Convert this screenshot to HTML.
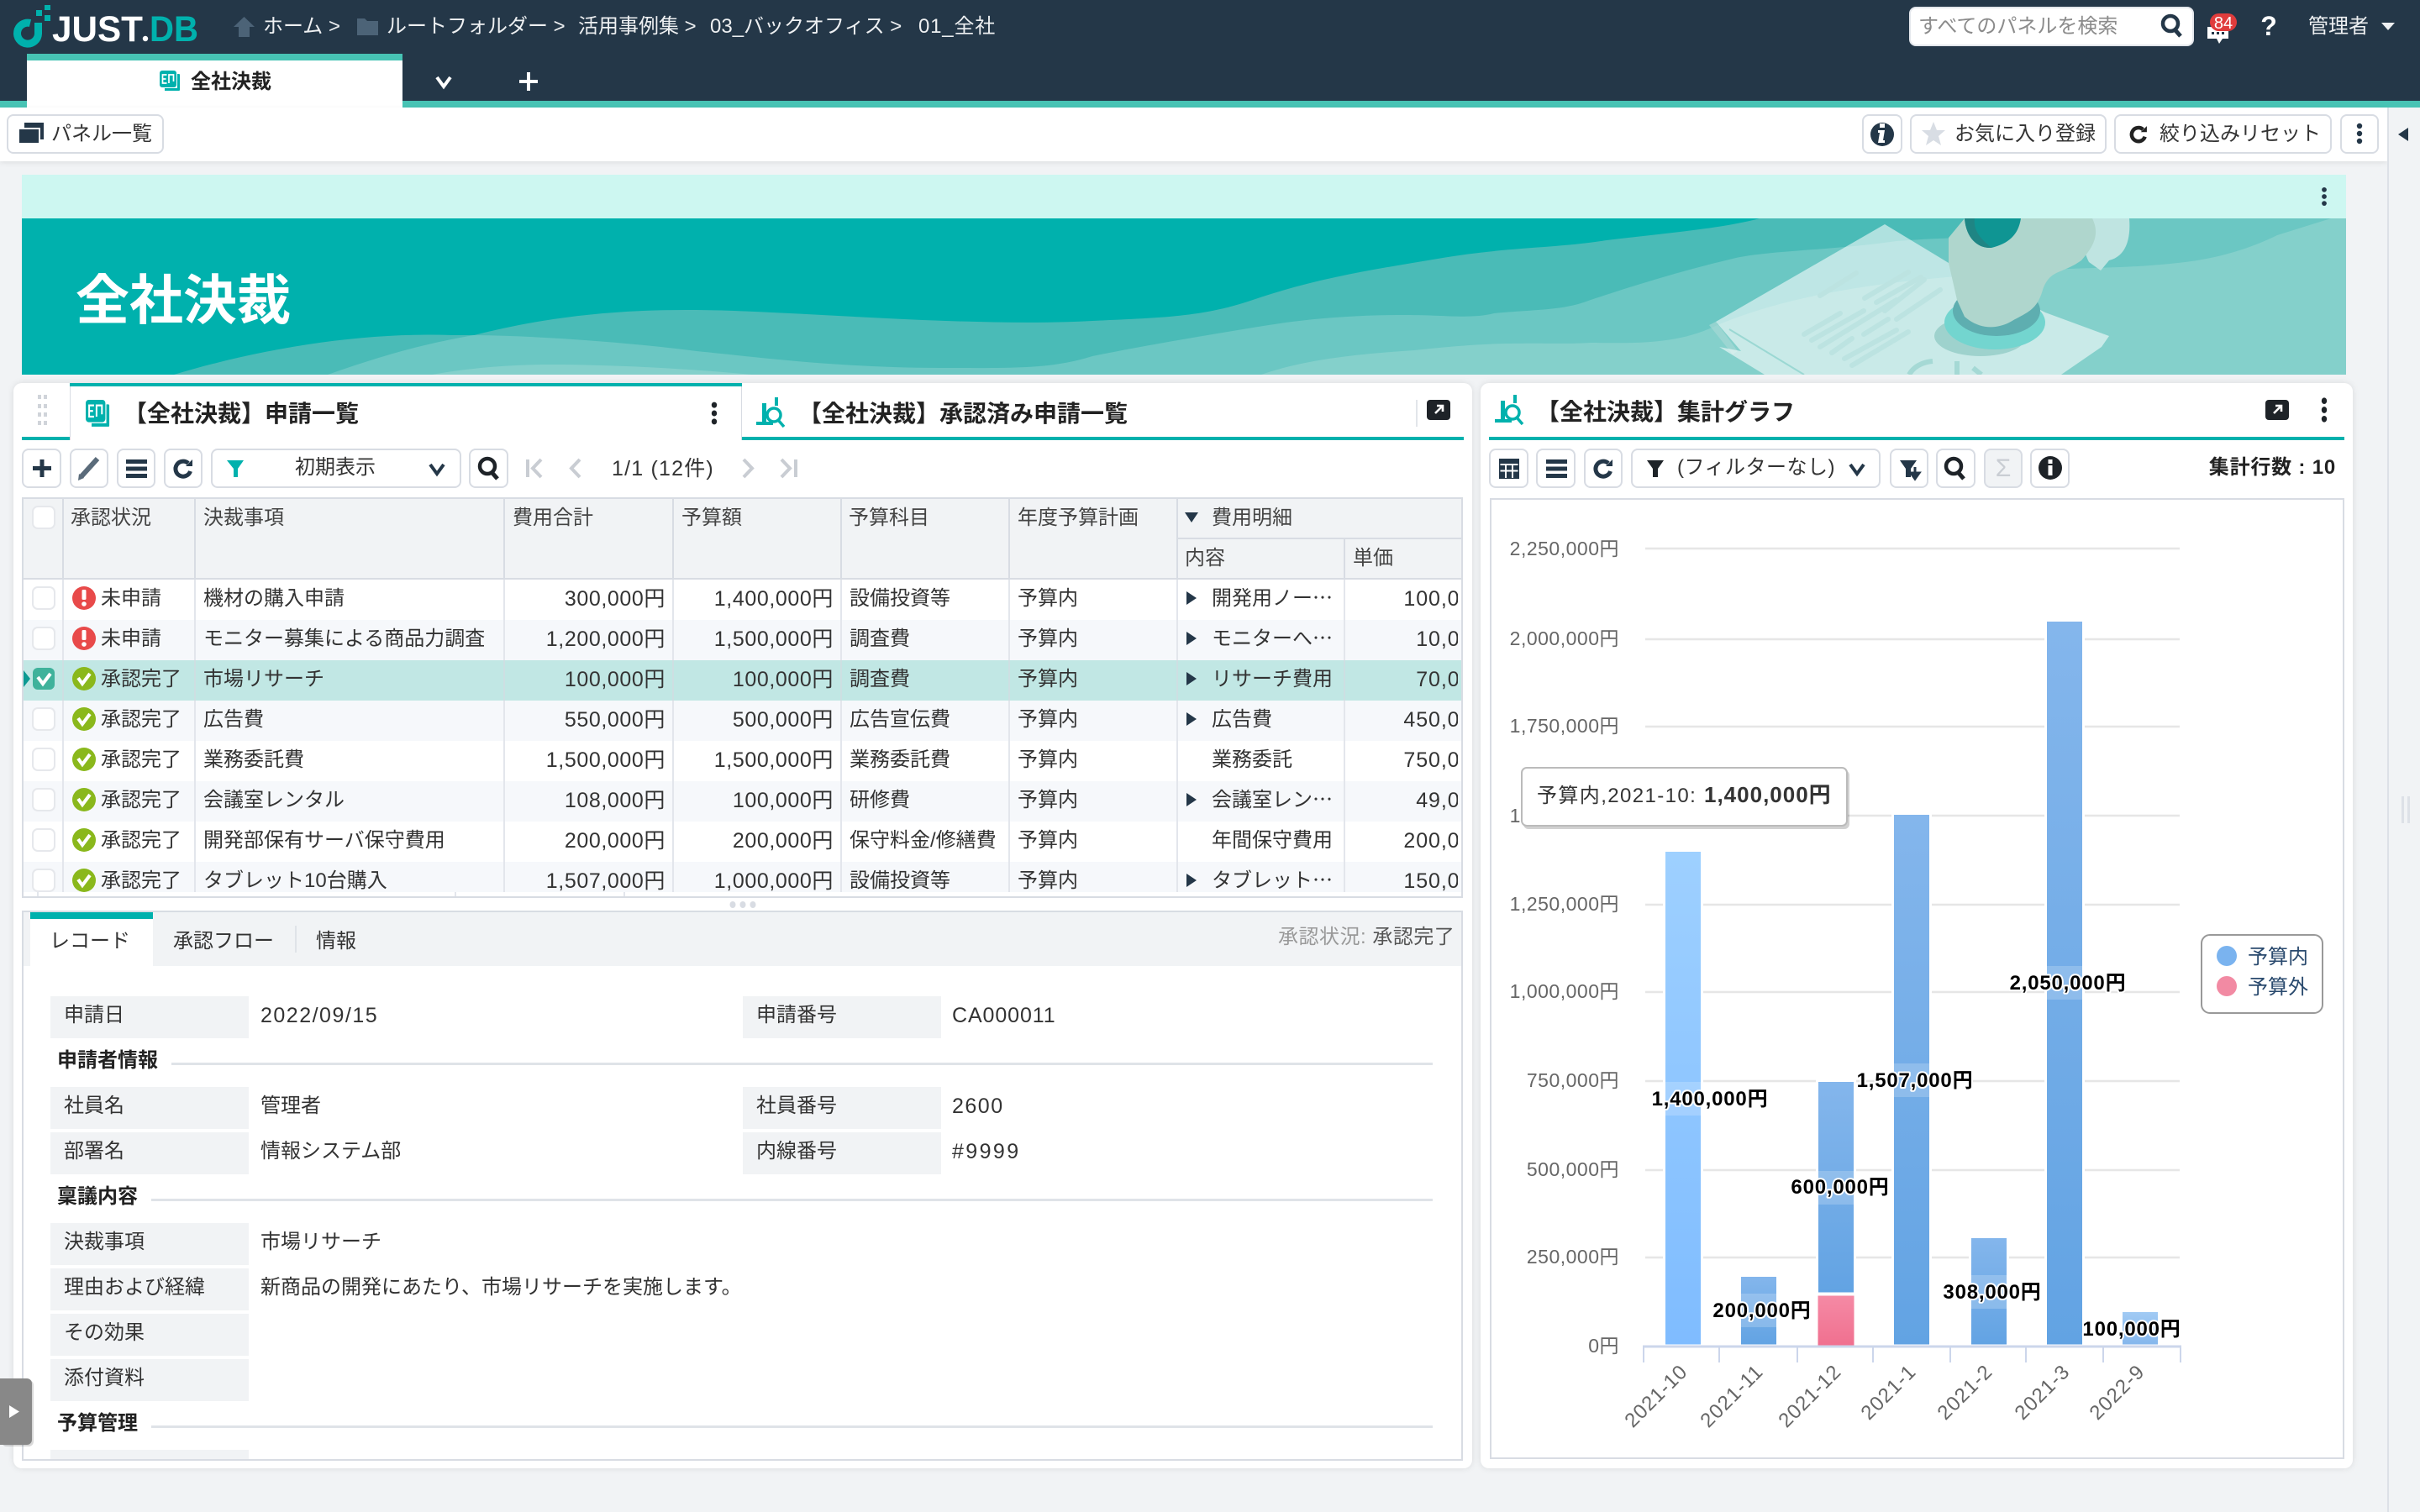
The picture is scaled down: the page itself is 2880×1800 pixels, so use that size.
<!DOCTYPE html>
<html lang="ja"><head><meta charset="utf-8"><title>全社決裁</title>
<style>
*{box-sizing:border-box}
html,body{margin:0;padding:0;width:2880px;height:1800px;overflow:hidden;background:#f1f3f5;font-family:"Liberation Sans","Noto Sans CJK JP",sans-serif;font-size:24px;color:#333}
.b{position:absolute}
.t{position:absolute;line-height:48px;height:48px;white-space:nowrap;transform:translateY(-22px)}
.w{color:#eef0f2}
.btn{position:absolute;background:#fff;border:2px solid #d8dce3;border-radius:8px;height:47px;top:534px}
.btn2{position:absolute;background:#fff;border:2px solid #d8dce3;border-radius:8px;height:47px;top:136px}
.n{font-size:25px;letter-spacing:1.5px}
table{border-collapse:separate;border-spacing:0;table-layout:fixed;width:1711px;font-size:24px}
th{font-weight:400;background:#f1f3f5;border-right:2px solid #d8dce3;border-bottom:2px solid #d8dce3;text-align:left;vertical-align:top;line-height:46px;padding:0 0 0 8px;height:48px;color:#444;overflow:hidden;white-space:nowrap}
td{height:48px;padding:0 0 2px 8px;border-right:2px solid #e3e6ec;white-space:nowrap;overflow:hidden;line-height:44px;color:#333}
tr.e td{background:#f6f8fb}
tr.o td{background:#fff}
tr.s td{background:#c1e7e4;border-right-color:#cddfe2}
td.r{text-align:right;padding-right:8px;font-size:25px;letter-spacing:.6px}
td.s{padding-left:44px}
td.k{padding-left:9px}
td.d{padding-left:40px}
td.u{padding:0 0 2px 0;font-size:25px;letter-spacing:.9px;text-align:right}
tr.o td.u{border-right:4px solid #fff}
tr.e td.u{border-right:4px solid #f6f8fb}
tr.s td.u{border-right:4px solid #c1e7e4}
td.u span{display:block;margin-right:-58px}
.lb{position:absolute;background:#f1f3f5;height:50px;width:236px}
.sl{position:absolute;height:3px;background:#dfe3e8;right:1175px}
</style></head><body>

<!-- header -->
<div class="b" style="left:0;top:0;width:2880px;height:120px;background:#243748"></div>
<div class="b" style="left:0;top:120px;width:2880px;height:8px;background:#47c3b4"></div>
<div class="b" style="left:32px;top:64px;width:447px;height:64px;background:#fff;border-top:8px solid #47c3b4"></div>
<div class="t" style="left:227px;top:96px;font-weight:700;color:#222">全社決裁</div>

<div class="t w" style="left:313px;top:30px">ホーム &gt;</div>
<div class="t w" style="left:460px;top:30px">ルートフォルダー &gt;</div>
<div class="t w" style="left:688px;top:30px">活用事例集 &gt;</div>
<div class="t w" style="left:845px;top:30px">03_バックオフィス &gt;</div>
<div class="t w" style="left:1093px;top:30px;letter-spacing:.8px">01_全社</div>

<div class="b" style="left:2272px;top:8px;width:339px;height:47px;background:#fff;border-radius:8px;border:2px solid #e4e7ec"></div>
<div class="t" style="left:2283px;top:30px;color:#8b8b8b">すべてのパネルを検索</div>
<div class="t w" style="left:2747px;top:30px">管理者</div>

<!-- toolbar -->
<div class="b" style="left:0;top:128px;width:2841px;height:64px;background:#fff;box-shadow:0 2px 6px rgba(0,0,0,.08)"></div>
<div class="b" style="left:2841px;top:128px;width:39px;height:1672px;background:#f1f3f5;border-left:2px solid #dde1e7"></div>
<div class="btn2" style="left:8px;width:187px"></div>
<div class="t" style="left:61px;top:158px">パネル一覧</div>
<div class="btn2" style="left:2216px;width:48px"></div>
<div class="btn2" style="left:2273px;width:234px"></div>
<div class="t" style="left:2326px;top:158px">お気に入り登録</div>
<div class="btn2" style="left:2516px;width:259px"></div>
<div class="t" style="left:2570px;top:158px">絞り込みリセット</div>
<div class="btn2" style="left:2785px;width:46px"></div>

<!-- banner -->
<div class="b" style="left:26px;top:208px;width:2766px;height:52px;background:#cdf7f1"></div>
<svg class="b" style="left:26px;top:260px" width="2766" height="186" viewBox="26 260 2766 186">
<rect x="26" y="260" width="2766" height="186" fill="#00b1ad"/>
<path fill="#4abbb7" d="M207 446C310 415 430 395 539 399L564 399C640 380 720 368 829 369C950 370 1150 390 1300 382C1380 378 1430 378 1491 357C1570 330 1640 320 1711 308C1790 294 1850 296 1912 286C1980 278 2050 272 2094 260L2792 260L2792 446Z"/>
<path fill="#6bc7c3" d="M390 446C450 425 500 410 564 399C650 400 750 408 829 418C900 425 1000 438 1119 438C1200 438 1250 440 1300 424C1370 410 1430 400 1491 390C1560 378 1620 375 1673 375C1720 375 1750 380 1778 373C1830 368 1860 370 1893 357C1930 345 1990 325 2066 307C2110 298 2180 298 2257 287C2340 280 2440 285 2532 260L2792 260L2792 446Z"/>
<path fill="#84d0cb" d="M514 446C570 436 620 434 655 434C720 434 810 438 895 446Z"/>
<path fill="#84d0cb" d="M1501 446C1560 425 1640 420 1683 417C1730 412 1770 409 1798 409C1840 408 1860 410 1893 408C1930 408 1990 412 2037 390C2150 340 2300 330 2429 322C2480 318 2530 320 2592 313C2640 308 2680 295 2710 280L2774 260L2792 260L2792 446Z"/>
<path fill="#a5d8d4" opacity=".7" d="M2042 383L2034 387L2062 422L2068 418Z"/>
<path fill="#fff" opacity=".56" d="M2243 267L2042 383L2072 418L2046 413L2100 446L2453 446L2501 413L2510 400L2434 372L2319 313Z"/>
<path fill="none" stroke="#9bd8d3" stroke-width="2" d="M2058 392L2147 446"/>
<g stroke="#bce3e1" stroke-width="6" stroke-linecap="round" fill="none">
<path d="M2166 352L2209 325M2219 355L2271 324M2233 360L2286 330M2147 398L2190 373M2156 405L2218 370M2166 413L2257 357M2180 420L2204 403M2195 427L2257 393M2204 435L2271 395M2218 398L2247 380M2257 380L2309 345M2243 370L2290 333"/>
</g>
<path d="M2272 446Q2280 432 2300 430M2329 430V446M2348 438L2358 446" stroke="#a5d9d5" stroke-width="6" fill="none"/>
<ellipse cx="2357" cy="400" rx="55" ry="24" fill="#9ed2cd"/>
<ellipse cx="2374" cy="384" rx="60" ry="32" fill="#73d5cf"/>
<ellipse cx="2376" cy="370" rx="52" ry="30" fill="#5eaeb0"/>
<path fill="#bfe4e1" d="M2466 260L2534 260C2536 285 2530 305 2510 310L2500 322L2486 312C2480 300 2476 280 2466 260Z"/>
<path fill="#afd6cd" d="M2338 260L2319 283L2319 313L2329 357L2338 377C2355 392 2375 392 2391 384C2412 372 2424 370 2431 345C2440 320 2453 327 2477 310C2490 295 2500 280 2490 260Z"/>
<path fill="#0f9593" d="M2338 260C2340 285 2355 296 2370 295C2390 290 2402 280 2405 260Z"/>
<path fill="#1f8584" d="M2338 260C2340 285 2355 296 2370 295C2358 285 2348 275 2350 260Z"/>
</svg>
<div class="t" style="left:90px;top:356px;font-size:64px;font-weight:700;color:#fff">全社決裁</div>

<!-- left card -->
<div class="b" style="left:16px;top:456px;width:1736px;height:1292px;background:#fff;border-radius:10px;box-shadow:0 0 8px rgba(0,0,0,.1)"></div>
<div class="b" style="left:26px;top:520px;width:58px;height:4px;background:#00b1ad"></div>
<div class="b" style="left:883px;top:520px;width:859px;height:4px;background:#00b1ad"></div>
<div class="b" style="left:83px;top:456px;width:800px;height:4px;background:#00b1ad"></div>
<div class="b" style="left:83px;top:460px;width:1px;height:64px;background:#d8dce3"></div>
<div class="b" style="left:882px;top:460px;width:1px;height:64px;background:#d8dce3"></div>
<div class="b" style="left:1685px;top:476px;width:2px;height:32px;background:#e2e5ea"></div>
<div class="t" style="left:147px;top:491px;font-size:28px;font-weight:700;color:#222">【全社決裁】申請一覧</div>
<div class="t" style="left:950px;top:491px;font-size:28px;font-weight:700;color:#222">【全社決裁】承認済み申請一覧</div>

<div class="btn" style="left:26px;width:47px"></div>
<div class="btn" style="left:83px;width:46px"></div>
<div class="btn" style="left:139px;width:46px"></div>
<div class="btn" style="left:195px;width:46px"></div>
<div class="btn" style="left:251px;width:298px"></div>
<div class="btn" style="left:558px;width:47px"></div>
<div class="t" style="left:351px;top:555px">初期表示</div>
<div class="t" style="left:728px;top:556px;font-size:25px;letter-spacing:1.2px">1/1 (12件)</div>

<!-- table -->
<div class="b" style="left:26px;top:592px;width:1715px;height:477px;border:2px solid #d8dce3;background:#fff">
<div style="height:468px;overflow:hidden">
<table>
<colgroup><col style="width:48px"><col style="width:157px"><col style="width:368px"><col style="width:201px"><col style="width:200px"><col style="width:200px"><col style="width:200px"><col style="width:199px"><col style="width:138px"></colgroup>
<thead>
<tr><th rowspan="2"></th><th rowspan="2">承認状況</th><th rowspan="2" style="padding-left:9px">決裁事項</th><th rowspan="2" style="padding-left:9px">費用合計</th><th rowspan="2" style="padding-left:9px">予算額</th><th rowspan="2" style="padding-left:8px">予算科目</th><th rowspan="2" style="padding-left:9px">年度予算計画</th><th colspan="2" style="padding-left:40px;border-right:0">費用明細</th></tr>
<tr><th style="padding-left:8px">内容</th><th style="padding-left:9px;border-right:0">単価</th></tr>
</thead>
<tbody>
<tr class="o"><td></td><td class="s">未申請</td><td class="k">機材の購入申請</td><td class="r">300,000円</td><td class="r">1,400,000円</td><td class="k">設備投資等</td><td class="k">予算内</td><td class="d">開発用ノー⋯</td><td class="u"><span>100,000円</span></td></tr>
<tr class="e"><td></td><td class="s">未申請</td><td class="k">モニター募集による商品力調査</td><td class="r">1,200,000円</td><td class="r">1,500,000円</td><td class="k">調査費</td><td class="k">予算内</td><td class="d">モニターへ⋯</td><td class="u"><span>10,000円</span></td></tr>
<tr class="s"><td></td><td class="s">承認完了</td><td class="k">市場リサーチ</td><td class="r">100,000円</td><td class="r">100,000円</td><td class="k">調査費</td><td class="k">予算内</td><td class="d">リサーチ費用</td><td class="u"><span>70,000円</span></td></tr>
<tr class="e"><td></td><td class="s">承認完了</td><td class="k">広告費</td><td class="r">550,000円</td><td class="r">500,000円</td><td class="k">広告宣伝費</td><td class="k">予算内</td><td class="d">広告費</td><td class="u"><span>450,000円</span></td></tr>
<tr class="o"><td></td><td class="s">承認完了</td><td class="k">業務委託費</td><td class="r">1,500,000円</td><td class="r">1,500,000円</td><td class="k">業務委託費</td><td class="k">予算内</td><td class="d">業務委託</td><td class="u"><span>750,000円</span></td></tr>
<tr class="e"><td></td><td class="s">承認完了</td><td class="k">会議室レンタル</td><td class="r">108,000円</td><td class="r">100,000円</td><td class="k">研修費</td><td class="k">予算内</td><td class="d">会議室レン⋯</td><td class="u"><span>49,000円</span></td></tr>
<tr class="o"><td></td><td class="s">承認完了</td><td class="k">開発部保有サーバ保守費用</td><td class="r">200,000円</td><td class="r">200,000円</td><td class="k">保守料金/修繕費</td><td class="k">予算内</td><td class="d">年間保守費用</td><td class="u"><span>200,000円</span></td></tr>
<tr class="e"><td></td><td class="s">承認完了</td><td class="k">タブレット10台購入</td><td class="r">1,507,000円</td><td class="r">1,000,000円</td><td class="k">設備投資等</td><td class="k">予算内</td><td class="d">タブレット⋯</td><td class="u"><span>150,000円</span></td></tr>
</tbody></table>
</div></div>

<!-- lower pane -->
<div class="b" style="left:26px;top:1084px;width:1715px;height:655px;border:2px solid #d8dce3;background:#fff;overflow:hidden">
<div class="b" style="left:0;top:0;width:1711px;height:64px;background:#f1f3f5"></div>
<div class="b" style="left:8px;top:0;width:146px;height:64px;background:#fff;border-top:8px solid #00b1ad"></div>
<div class="b" style="left:323px;top:16px;width:2px;height:32px;background:#dfe3e8"></div>
</div>
<div class="t" style="left:59px;top:1119px">レコード</div>
<div class="t" style="left:206px;top:1119px">承認フロー</div>
<div class="t" style="left:376px;top:1119px">情報</div>
<div class="t" style="left:1521px;top:1114px;color:#999;letter-spacing:.5px">承認状況: <span style="color:#555">承認完了</span></div>

<div class="lb" style="left:60px;top:1186px"></div><div class="t" style="left:76px;top:1207px">申請日</div>
<div class="t n" style="left:310px;top:1207px">2022/09/15</div>
<div class="lb" style="left:884px;top:1186px"></div><div class="t" style="left:900px;top:1207px">申請番号</div>
<div class="t n" style="left:1133px;top:1207px;letter-spacing:.9px">CA000011</div>

<div class="t" style="left:68px;top:1261px;font-weight:700;color:#222">申請者情報</div><div class="sl" style="left:204px;top:1265px"></div>
<div class="lb" style="left:60px;top:1294px"></div><div class="t" style="left:76px;top:1315px">社員名</div>
<div class="t" style="left:310px;top:1315px">管理者</div>
<div class="lb" style="left:884px;top:1294px"></div><div class="t" style="left:900px;top:1315px">社員番号</div>
<div class="t n" style="left:1133px;top:1315px">2600</div>
<div class="lb" style="left:60px;top:1348px"></div><div class="t" style="left:76px;top:1369px">部署名</div>
<div class="t" style="left:310px;top:1369px">情報システム部</div>
<div class="lb" style="left:884px;top:1348px"></div><div class="t" style="left:900px;top:1369px">内線番号</div>
<div class="t n" style="left:1133px;top:1369px;letter-spacing:2.4px">#9999</div>

<div class="t" style="left:68px;top:1423px;font-weight:700;color:#222">稟議内容</div><div class="sl" style="left:180px;top:1427px"></div>
<div class="lb" style="left:60px;top:1456px"></div><div class="t" style="left:76px;top:1477px">決裁事項</div>
<div class="t" style="left:310px;top:1477px">市場リサーチ</div>
<div class="lb" style="left:60px;top:1510px"></div><div class="t" style="left:76px;top:1531px">理由および経緯</div>
<div class="t" style="left:310px;top:1531px">新商品の開発にあたり、市場リサーチを実施します。</div>
<div class="lb" style="left:60px;top:1564px"></div><div class="t" style="left:76px;top:1585px">その効果</div>
<div class="lb" style="left:60px;top:1618px"></div><div class="t" style="left:76px;top:1639px">添付資料</div>
<div class="t" style="left:68px;top:1693px;font-weight:700;color:#222">予算管理</div><div class="sl" style="left:180px;top:1697px"></div>
<div class="b" style="left:60px;top:1726px;width:236px;height:11px;background:#f1f3f5"></div>

<!-- right card -->
<div class="b" style="left:1762px;top:456px;width:1038px;height:1292px;background:#fff;border-radius:10px;box-shadow:0 0 8px rgba(0,0,0,.1)"></div>
<div class="b" style="left:1772px;top:520px;width:1018px;height:4px;background:#00b1ad"></div>
<div class="t" style="left:1828px;top:489px;font-size:28px;font-weight:700;color:#222">【全社決裁】集計グラフ</div>
<div class="btn" style="left:1772px;width:47px"></div>
<div class="btn" style="left:1828px;width:47px"></div>
<div class="btn" style="left:1885px;width:46px"></div>
<div class="btn" style="left:1941px;width:297px"></div>
<div class="btn" style="left:2249px;width:46px"></div>
<div class="btn" style="left:2304px;width:47px"></div>
<div class="btn" style="left:2361px;width:46px;background:#f1f3f5"></div>
<div class="btn" style="left:2416px;width:47px"></div>
<div class="t" style="left:1996px;top:555px;letter-spacing:.5px">(フィルターなし)</div>
<div class="t" style="left:2361px;top:556px;width:46px;text-align:center;color:#c9cdd3;font-size:30px">Σ</div>
<div class="t" style="left:2560px;width:220px;text-align:right;top:555px;font-weight:700;color:#222;letter-spacing:.8px">集計行数 : 10</div>
<div class="b" style="left:1773px;top:593px;width:1017px;height:1144px;border:2px solid #d8dce3;background:#fff"></div>

<!-- overlay -->
<svg class="b" style="left:0;top:0;font-family:'Liberation Sans','Noto Sans CJK JP',sans-serif" width="2880" height="1800" viewBox="0 0 2880 1800">
<defs>
<linearGradient id="gb" x1="0" y1="0" x2="0" y2="1"><stop offset="0" stop-color="#84b6ec"/><stop offset="1" stop-color="#62a3e3"/></linearGradient>
<linearGradient id="gl" x1="0" y1="0" x2="0" y2="1"><stop offset="0" stop-color="#9ed0ff"/><stop offset="1" stop-color="#7fbcff"/></linearGradient>
<linearGradient id="gp" x1="0" y1="0" x2="0" y2="1"><stop offset="0" stop-color="#f58aa5"/><stop offset="1" stop-color="#f0708f"/></linearGradient>
<linearGradient id="g7" x1="0" y1="0" x2="0" y2="1"><stop offset="0" stop-color="#a2cbf4"/><stop offset="1" stop-color="#84b6ec"/></linearGradient>
<g id="ok"><circle r="14" fill="#8ab81c"/><path d="M-7 -1L-2 6L7 -6" fill="none" stroke="#fff" stroke-width="4"/></g>
<g id="er"><circle r="14" fill="#e84a4a"/><rect x="-2.5" y="-10" width="5" height="12" rx="1.5" fill="#fff"/><circle cy="7" r="2.8" fill="#fff"/></g>
<g id="cb"><rect x="-13" y="-13" width="26" height="26" rx="6" fill="#fff" stroke="#e6e8ec" stroke-width="2"/></g>
<g id="rf"><path d="M6 -6.500A9 9 0 1 0 8.500 3" fill="none" stroke="currentColor" stroke-width="5"/><path d="M3 -3L11 -3L11 -11Z" fill="currentColor"/></g>
<g id="sr"><circle cx="-2" cy="-2" r="9" fill="none" stroke="currentColor" stroke-width="4.5"/><path d="M3 5L10 13" stroke="currentColor" stroke-width="5" fill="none"/></g>
<g id="dt"><circle cy="-9" r="3.2"/><circle r="3.2"/><circle cy="9" r="3.2"/></g>
<g id="cv"><path d="M-8 -5L0 6L8 -5" fill="none" stroke="currentColor" stroke-width="4"/></g>
<g id="an" fill="#00b1ad"><rect x="23" y="0" width="4" height="10"/><rect x="8" y="7" width="5" height="25"/><rect x="1" y="29" width="20" height="4"/><circle cx="22" cy="21" r="8" fill="#fff" stroke="#00b1ad" stroke-width="3.5"/><path d="M27 27L34 35" stroke="#00b1ad" stroke-width="3.5"/></g>
<g id="ex"><rect width="28" height="24" rx="4" fill="#1e2328"/><path d="M10 16L18 8M12 7H19V14" fill="none" stroke="#fff" stroke-width="2.6"/></g>
<g id="doc"><path d="M20 4H23a1 1 0 0 1 1 1V23a1 1 0 0 1-1 1H6V21H21V4Z" fill="#00b1ad"/><rect width="20" height="20" rx="3" fill="#00b1ad"/><path d="M8.5 5H3.5V15H8.5M3.5 10H7.5M11 15V5H16.5V13" stroke="#fff" fill="none" stroke-width="1.7"/></g>
</defs>

<!-- logo -->
<path d="M36 27.500A12.500 12.500 0 1 0 45.500 40V27" fill="none" stroke="#00b1ad" stroke-width="9"/>
<rect x="43" y="12" width="7" height="7" fill="#00b1ad"/><rect x="53" y="6" width="7" height="6" fill="#00b1ad"/><rect x="53" y="18" width="7" height="7" fill="#00b1ad"/>
<text x="62" y="49" font-size="43" font-weight="700" fill="#fff" textLength="108" lengthAdjust="spacingAndGlyphs">JUST</text>
<circle cx="173" cy="46" r="3.2" fill="#fff"/>
<text x="178" y="49" font-size="43" font-weight="700" fill="#00b1ad" textLength="58" lengthAdjust="spacingAndGlyphs">DB</text>

<path d="M290.5 20L278 32H284V44H297V32H303Z" fill="#4c6377"/>
<path d="M425 22H434L437 25H450V42H425Z" fill="#4c6377"/>
<use href="#doc" x="190" y="84"/>
<g color="#fff" transform="translate(528 97)"><use href="#cv"/></g>
<path d="M629 86V108M618 97H640" stroke="#fff" stroke-width="4"/>

<!-- header right -->
<g color="#243748" transform="translate(2585 30)"><use href="#sr"/></g>
<path d="M2627 32H2652V46H2645L2641 52L2638 46H2627Z" fill="#fff"/>
<path d="M2632 39.500h3M2638 39.500h3M2644 39.500h3" stroke="#243748" stroke-width="3"/>
<rect x="2630" y="16" width="32" height="21" rx="10.5" fill="#e03c3c"/>
<text x="2646" y="34" text-anchor="middle" font-size="20" fill="#fff">84</text>
<text x="2700" y="42" text-anchor="middle" font-size="32" font-weight="700" fill="#fff">?</text>
<path d="M2834 27H2850L2842 36Z" fill="#eef0f2"/>

<!-- toolbar icons -->
<rect x="29" y="146" width="23" height="20" fill="#243748"/><rect x="21" y="152" width="27" height="20" fill="#fff"/><rect x="23" y="154" width="23" height="16" fill="#243748"/>
<ellipse cx="2240" cy="160" rx="14" ry="14" fill="#243748"/><path d="M2237 152h6v-5h-6zM2235 155h8l-2 12h2v3h-8l2-12h-2z" fill="#fff"/>
<path d="M2301 145L2305 155L2315 155L2307 162L2310 173L2301 167L2292 173L2295 162L2287 155L2297 155Z" fill="#d8dde4"/>
<g color="#222" transform="translate(2545 160) scale(.9)"><use href="#rf"/></g>
<g fill="#243748" transform="translate(2808 159)"><use href="#dt"/></g>
<path d="M2866 152V168L2854 160Z" fill="#243748"/>
<rect x="2858" y="948" width="3" height="32" fill="#dde1e7"/><rect x="2865" y="948" width="3" height="32" fill="#dde1e7"/>
<g fill="#243748" transform="translate(2766 234) scale(.9)"><use href="#dt"/></g>

<!-- left tab icons -->
<g fill="#d0d4da"><rect x="45" y="470" width="4" height="5"/><rect x="52" y="470" width="4" height="5"/><rect x="45" y="481" width="4" height="5"/><rect x="52" y="481" width="4" height="5"/><rect x="45" y="491" width="4" height="5"/><rect x="52" y="491" width="4" height="5"/><rect x="45" y="501" width="4" height="5"/><rect x="52" y="501" width="4" height="5"/></g>
<use href="#doc" transform="translate(102 476) scale(1.17 1.33)"/>
<g fill="#1e2328" transform="translate(850 492)"><use href="#dt" transform="scale(1 1.1)"/></g>
<use href="#an" x="899" y="473"/>
<use href="#ex" x="1698" y="476"/>

<!-- left toolbar -->
<path d="M50 547V568M39 557.500H61" stroke="#243748" stroke-width="5"/>
<path d="M116 546L97 567" stroke="#5a6b7a" stroke-width="6"/><path d="M93 572L94 564L100 569Z" fill="#5a6b7a"/>
<path d="M150 549.500H175M150 558H175M150 566.500H175" stroke="#243748" stroke-width="5"/>
<g color="#243748" transform="translate(218 558)"><use href="#rf"/></g>
<path d="M270 548H290L283 558V568H278V558Z" fill="#00b1ad"/>
<g color="#243748" transform="translate(520 558)"><use href="#cv"/></g>
<g color="#1e2328" transform="translate(582 557)"><use href="#sr"/></g>
<g fill="none" stroke="#c9cdd3" stroke-width="4"><path d="M628 547V568M644 547L634 557.500L644 568"/><path d="M690 547L680 557.500L690 568"/><path d="M885 547L895 557.500L885 568"/><path d="M930 547L940 557.500L930 568M947 547V568"/></g>

<!-- table icons -->
<use href="#cb" x="52" y="616"/>
<path d="M1410 610H1426L1418 622Z" fill="#243748"/>
<use href="#cb" x="52" y="712"/><use href="#er" x="100" y="712"/>
<use href="#cb" x="52" y="760"/><use href="#er" x="100" y="760"/>
<path d="M28 798L36 808L28 818Z" fill="#0c9a92"/>
<rect x="39" y="795" width="26" height="26" rx="6" fill="#3fb29b"/><path d="M45 806L51 814L60 802" fill="none" stroke="#fff" stroke-width="4"/><use href="#ok" x="100" y="808"/>
<use href="#cb" x="52" y="856"/><use href="#ok" x="100" y="856"/>
<use href="#cb" x="52" y="904"/><use href="#ok" x="100" y="904"/>
<use href="#cb" x="52" y="952"/><use href="#ok" x="100" y="952"/>
<use href="#cb" x="52" y="1000"/><use href="#ok" x="100" y="1000"/>
<use href="#cb" x="52" y="1048"/><use href="#ok" x="100" y="1048"/>
<g fill="#243748"><path d="M1412 704V720L1424 712Z"/><path d="M1412 752V768L1424 760Z"/><path d="M1412 800V816L1424 808Z"/><path d="M1412 848V864L1424 856Z"/><path d="M1412 944V960L1424 952Z"/><path d="M1412 1040V1056L1424 1048Z"/></g>
<path d="M45 1062V1067M542 1062V1067M743 1062V1067" stroke="#e3e6ec" stroke-width="2"/>
<g fill="#d8dce3"><ellipse cx="872" cy="1077" rx="3.500" ry="4"/><ellipse cx="884" cy="1077" rx="3.500" ry="4"/><ellipse cx="896" cy="1077" rx="3.500" ry="4"/></g>

<!-- right card header -->
<use href="#an" x="1778" y="470"/>
<use href="#ex" x="2696" y="476"/>
<g fill="#1e2328" transform="translate(2766 488) scale(1 1.2)"><use href="#dt"/></g>
<!-- right toolbar icons -->
<rect x="1784" y="546" width="24" height="24" fill="#243748"/><path d="M1785.500 553H1806.500M1785.500 560.500H1806.500M1792 553V569M1800 553V569" stroke="#fff" stroke-width="2"/>
<path d="M1840 549.500H1865M1840 558H1865M1840 566.500H1865" stroke="#243748" stroke-width="5"/>
<g color="#243748" transform="translate(1908 558)"><use href="#rf"/></g>
<path d="M1960 548H1980L1973 558V568H1967V558Z" fill="#1e2328"/>
<g color="#243748" transform="translate(2210 558)"><use href="#cv"/></g>
<path d="M2261 548H2281L2274 558V568H2268V558Z" fill="#243748"/><path d="M2279 556V566M2274 563L2279 570L2284 563Z" stroke="#243748" stroke-width="3" fill="#243748"/>
<g color="#1e2328" transform="translate(2327 557)"><use href="#sr"/></g>
<ellipse cx="2440" cy="557" rx="14" ry="14" fill="#1e2328"/><rect x="2437.500" y="547" width="5" height="5" fill="#fff"/><rect x="2437.500" y="554" width="5" height="12" fill="#fff"/>

<!-- chart grid -->
<g stroke="#e6e6e6" stroke-width="2.500"><path d="M1958 653H2594M1958 761H2594M1958 865H2594M1958 971H2594M1958 1077H2594M1958 1181H2594M1958 1287H2594M1958 1393H2594M1958 1497H2594"/></g>
<g font-size="23" fill="#666" text-anchor="end" letter-spacing=".5">
<text x="1927" y="661">2,250,000円</text><text x="1927" y="768">2,000,000円</text><text x="1927" y="872">1,750,000円</text><text x="1927" y="979">1,500,000円</text><text x="1927" y="1084">1,250,000円</text><text x="1927" y="1188">1,000,000円</text><text x="1927" y="1294">750,000円</text><text x="1927" y="1400">500,000円</text><text x="1927" y="1504">250,000円</text><text x="1927" y="1610">0円</text>
</g>
<!-- bars -->
<g stroke="#fff" stroke-width="3">
<rect x="1980.500" y="1012.500" width="45" height="589.500" fill="url(#gl)"/>
<rect x="2070.500" y="1518.500" width="45" height="83.500" fill="url(#gb)"/>
<rect x="2162.500" y="1286.500" width="45" height="253.500" fill="url(#gb)"/>
<rect x="2163" y="1542" width="44" height="60" fill="url(#gp)" stroke-width="1"/>
<rect x="2252.500" y="968.500" width="45" height="633.500" fill="url(#gb)"/>
<rect x="2344.500" y="1472.500" width="45" height="129.500" fill="url(#gb)"/>
<rect x="2434.500" y="738.500" width="45" height="863.500" fill="url(#gb)"/>
<rect x="2524.500" y="1560.500" width="45" height="41.500" fill="url(#g7)"/>
</g>
<g fill="#fff" opacity=".2">
<rect x="1982" y="1288" width="42" height="40"/><rect x="2072" y="1540" width="42" height="40"/><rect x="2164" y="1394" width="42" height="40"/><rect x="2254" y="1266" width="42" height="40"/><rect x="2346" y="1518" width="42" height="40"/><rect x="2436" y="1150" width="42" height="40"/>
</g>
<!-- axis -->
<path d="M1955 1603H2596" stroke="#ccd6eb" stroke-width="3"/>
<path d="M1956 1604V1622M2046 1604V1622M2139 1604V1622M2229 1604V1622M2321 1604V1622M2411 1604V1622M2503 1604V1622M2595 1604V1622" stroke="#ccd6eb" stroke-width="2"/>
<g font-size="24" fill="#666" text-anchor="end">
<text transform="translate(2009 1635) rotate(-45)" textLength="93">2021-10</text>
<text transform="translate(2099 1635) rotate(-45)" textLength="93">2021-11</text>
<text transform="translate(2192 1635) rotate(-45)" textLength="93">2021-12</text>
<text transform="translate(2281 1635) rotate(-45)" textLength="80">2021-1</text>
<text transform="translate(2372 1635) rotate(-45)" textLength="80">2021-2</text>
<text transform="translate(2464 1635) rotate(-45)" textLength="80">2021-3</text>
<text transform="translate(2553 1635) rotate(-45)" textLength="80">2022-9</text>
</g>
<!-- data labels -->
<g font-size="24" font-weight="700" fill="#000" stroke="#fff" stroke-width="4" stroke-linejoin="round" paint-order="stroke" text-anchor="middle" letter-spacing=".8">
<text x="2035" y="1316">1,400,000円</text>
<text x="2097" y="1568">200,000円</text>
<text x="2190" y="1421">600,000円</text>
<text x="2279" y="1294">1,507,000円</text>
<text x="2371" y="1546">308,000円</text>
<text x="2461" y="1178">2,050,000円</text>
<text x="2537" y="1590">100,000円</text>
</g>
<!-- legend -->
<rect x="2620" y="1113" width="144" height="93" rx="10" fill="#fff" stroke="#999" stroke-width="2"/>
<circle cx="2650" cy="1138" r="12" fill="#7ab3ef"/><circle cx="2650" cy="1174" r="12" fill="#f28aa3"/>
<text x="2675" y="1147" font-size="24" fill="#2a4a6e">予算内</text><text x="2675" y="1183" font-size="24" fill="#2a4a6e">予算外</text>
<!-- tooltip -->
<rect x="1813" y="917" width="388" height="70" rx="6" fill="#000" opacity=".18"/>
<rect x="1811" y="914" width="387" height="69" rx="6" fill="#fff" stroke="#bbb" stroke-width="2"/>
<text x="1829" y="955" font-size="24" fill="#333" letter-spacing="1.4">予算内,2021-10:</text>
<text x="2028" y="955" font-size="26" font-weight="700" fill="#333" letter-spacing="1">1,400,000円</text>

<!-- side handle -->
<rect x="2" y="1643" width="38" height="79" rx="6" fill="#000" opacity=".15"/>
<path d="M0 1641H32a6 6 0 0 1 6 6V1714a6 6 0 0 1-6 6H0Z" fill="#888"/>
<path d="M11 1673L23 1680.500L11 1688Z" fill="#fff"/>
</svg>
</body></html>
